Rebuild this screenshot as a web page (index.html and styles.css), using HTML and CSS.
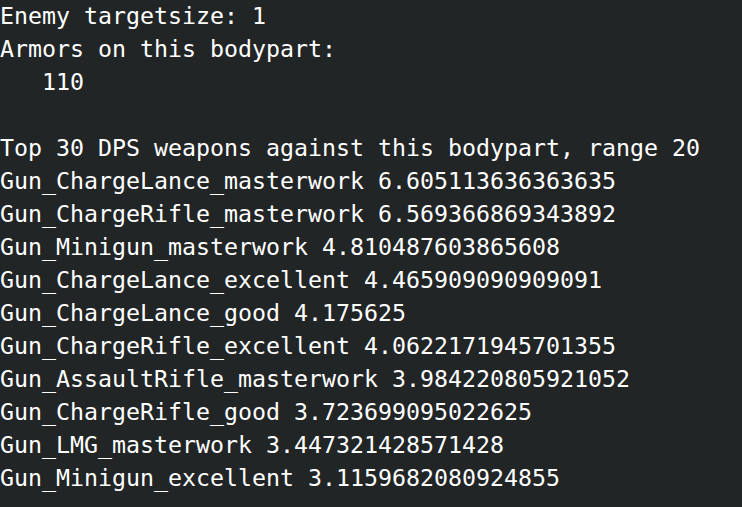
FILE: index.html
```html
<!DOCTYPE html>
<html>
<head>
<meta charset="utf-8">
<link rel="stylesheet" href="styles.css">
</head>
<body>
<pre class="out">Enemy targetsize: 1
Armors on this bodypart:
   110

Top 30 DPS weapons against this bodypart, range 20
Gun_ChargeLance_masterwork 6.605113636363635
Gun_ChargeRifle_masterwork 6.569366869343892
Gun_Minigun_masterwork 4.810487603865608
Gun_ChargeLance_excellent 4.465909090909091
Gun_ChargeLance_good 4.175625
Gun_ChargeRifle_excellent 4.0622171945701355
Gun_AssaultRifle_masterwork 3.984220805921052
Gun_ChargeRifle_good 3.723699095022625
Gun_LMG_masterwork 3.447321428571428
Gun_Minigun_excellent 3.1159682080924855</pre>
</body>
</html>
```

FILE: styles.css
```css
html, body {
  margin: 0;
  padding: 0;
  background: #222526;
  height: 100%;
  overflow: hidden;
}
.out {
  margin: -1px 0 0 0;
  padding: 0;
  color: #ffffff;
  font-family: "DejaVu Sans Mono", monospace;
  font-size: 23.25px;
  line-height: 33px;
}
```
